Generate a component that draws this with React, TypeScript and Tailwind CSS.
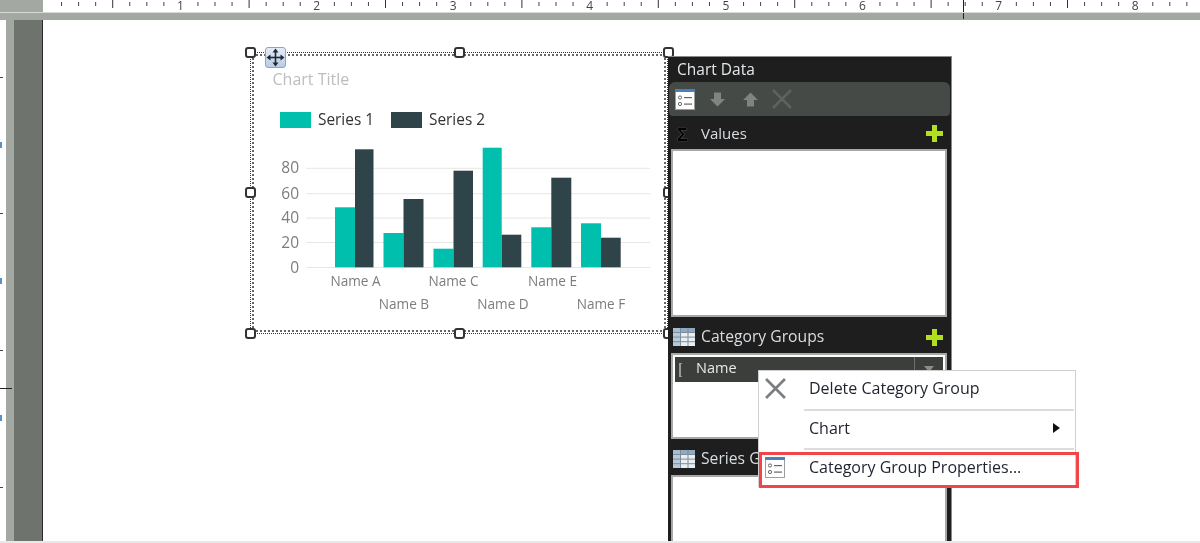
import React from "react";

const FONT = "'Open Sans','Noto Sans',sans-serif";
const BASE_LEFT = 43;
const TICK0 = 44;
const PER = 17.05;
const ticks = Array.from({ length: 68 }, (_, i) => i);

function TopRuler() {
  return (
    <svg width={1157} height={12} className="block overflow-visible">
      {ticks.map((i) => {
        const x = TICK0 + i * PER - BASE_LEFT;
        const m = i % 8;
        if (m === 0) return null;
        if (m === 4) return <rect key={i} x={x} y={0} width={1} height={8} fill="#333" />;
        return <rect key={i} x={x} y={2} width={1} height={4} fill="#444" />;
      })}
      {[1, 2, 3, 4, 5, 6, 7, 8].map((n) => (
        <text key={n} x={TICK0 + n * 8 * PER - BASE_LEFT} y={9.5} textAnchor="middle" fontSize={12} fontFamily={FONT} fill="#444">
          {n}
        </text>
      ))}
      <rect x={920} y={0} width={1} height={12} fill="#222" />
    </svg>
  );
}

function LeftRuler() {
  const marks = [77, 213, 350, 487];
  return (
    <svg width={6} height={523} className="block">
      {marks.map((y) => (
        <rect key={y} x={0} y={y - 20} width={3} height={1} fill="#444" />
      ))}
      {[145, 281, 418].map((y) => (
        <rect key={y} x={0} y={y - 23} width={2} height={6} fill="#5b8fc0" />
      ))}
    </svg>
  );
}

function Handle({ cls }: { cls: string }) {
  return <div className={`absolute w-[11px] h-[11px] rounded-[3px] bg-white border-2 border-[#333] ${cls}`} />;
}

function MoveIcon() {
  return (
    <div className="absolute left-[14px] top-[-6px] w-[21px] h-[21px] rounded-[3px] border border-[#8ea3c4] bg-gradient-to-b from-[#e6edf7] to-[#b9cbe6] flex items-center justify-center">
      <svg width="19" height="19" viewBox="0 0 19 19" fill="#1c2b33">
        <rect x="8.7" y="3" width="1.6" height="13" />
        <rect x="3" y="8.7" width="13" height="1.6" />
        <path d="M9.5 0.5 L12.5 4.5 H6.5 Z" />
        <path d="M9.5 18.5 L12.5 14.5 H6.5 Z" />
        <path d="M0.5 9.5 L4.5 6.5 V12.5 Z" />
        <path d="M18.5 9.5 L14.5 6.5 V12.5 Z" />
      </svg>
    </div>
  );
}

const bars = [
  [335, 20, 207.3, "#00bfad"], [355, 18.5, 149.3, "#2f4449"],
  [383.5, 20, 233, "#00bfad"], [403.5, 20, 199, "#2f4449"],
  [433.5, 20, 248.7, "#00bfad"], [453.5, 19.5, 170.7, "#2f4449"],
  [482.7, 19, 147.7, "#00bfad"], [501.7, 19.6, 234.7, "#2f4449"],
  [531.3, 20, 227.3, "#00bfad"], [551.3, 20, 177.7, "#2f4449"],
  [581, 20, 223.3, "#00bfad"], [601, 19.7, 237.7, "#2f4449"],
] as const;

function ChartSvg() {
  return (
    <svg className="absolute left-[-1px] top-[-1px]" width={420} height={284} viewBox="250 52 420 284">
      <text x={272.5} y={85} fontSize={16} fontFamily={FONT} fill="#bdbdbd">Chart Title</text>
      <rect x={280} y={112} width={31} height={16} fill="#00bfad" />
      <text x={318} y={125} fontSize={15.4} fontFamily={FONT} fill="#333">Series 1</text>
      <rect x={391} y={112} width={31} height={16} fill="#2f4449" />
      <text x={429} y={125} fontSize={15.4} fontFamily={FONT} fill="#333">Series 2</text>
      {[[168.3, "80"], [193.7, "60"], [218, "40"], [242.5, "20"], [267.5, "0"]].map(([y, l]) => (
        <g key={l as string}>
          <rect x={306} y={(y as number) - 0.5} width={344} height={1} fill="#e6e6e6" />
          <text x={299} y={(y as number) + 5} textAnchor="end" fontSize={15.5} fontFamily={FONT} fill="#7d7d7d">{l}</text>
        </g>
      ))}
      {bars.map(([x, w, t, c]) => (
        <rect key={x} x={x} y={t} width={w} height={267.3 - t} fill={c} />
      ))}
      {[["Name A", 355.5, 285.5], ["Name B", 404, 308.5], ["Name C", 453.5, 285.5], ["Name D", 503, 308.5], ["Name E", 552.5, 285.5], ["Name F", 601, 308.5]].map(([l, x, y]) => (
        <text key={l as string} x={x as number} y={y as number} textAnchor="middle" fontSize={13.6} fontFamily={FONT} fill="#7d7d7d">{l}</text>
      ))}
    </svg>
  );
}

function PropsIcon({ w = 20 }: { w?: number }) {
  return (
    <svg width={w} height={w + 1} viewBox="0 0 20 21" className="block">
      <rect x="0.5" y="0.5" width="19" height="20" fill="#fff" stroke="#9aa0a0" />
      <rect x="0" y="0" width="20" height="3" fill="#4a7fb8" />
      <circle cx="5" cy="8.5" r="1.6" fill="none" stroke="#666" />
      <circle cx="5" cy="15" r="1.6" fill="none" stroke="#666" />
      <rect x="9" y="8" width="8" height="1.2" fill="#666" />
      <rect x="9" y="14.5" width="8" height="1.2" fill="#666" />
    </svg>
  );
}

function GridIcon() {
  return (
    <svg width="22" height="18" viewBox="0 0 22 18" className="block">
      <rect width="22" height="18" fill="#e9eef3" />
      <rect width="22" height="4" fill="#8fa9c2" />
      <rect x="0" y="0" width="7" height="18" fill="#a9bfd3" opacity="0.8" />
      {[4, 8.6, 13.2].map((y) => <rect key={y} x="0" y={y} width="22" height="1" fill="#7e8c99" />)}
      {[7, 14.5].map((x) => <rect key={x} x={x} y="0" width="1" height="18" fill="#7e8c99" />)}
    </svg>
  );
}

function Plus() {
  return (
    <svg width="17" height="17" viewBox="0 0 17 17" className="block">
      <path d="M6 0h5v6h6v5h-6v6H6v-6H0V6h6z" fill="#b2df1e" />
    </svg>
  );
}

function X({ size, color }: { size: number; color: string }) {
  return (
    <svg width={size} height={size} viewBox="0 0 20 20" className="block">
      <path d="M1 1 L19 19 M19 1 L1 19" stroke={color} strokeWidth="2.6" />
    </svg>
  );
}

function Arrow({ up }: { up?: boolean }) {
  return (
    <svg width="15" height="15" viewBox="0 0 15 15" className="block">
      <path d={up ? "M7.5 0.5 L15 8 H11 V14.5 H4 V8 H0 Z" : "M7.5 14.5 L15 7 H11 V0.5 H4 V7 H0 Z"} fill="#7f847f" />
    </svg>
  );
}

function SectionHead({ icon, label, h, size }: { icon: React.ReactNode; label: string; h: string; size: string }) {
  return (
    <div className={`flex items-center ${h} ${size} text-[#d8dde0] pl-[5px] pr-[8px]`}>
      <div className="w-[25px] flex items-center">{icon}</div>
      <span className="ml-[3px]">{label}</span>
      <div className="ml-auto"><Plus /></div>
    </div>
  );
}

function Panel() {
  return (
    <div className="absolute left-[625px] top-[36px] w-[284px] h-[520px] bg-[#1e1e1e] border-r border-t border-[#8a8a8a] flex flex-col text-white">
      <div className="h-[25px] pl-[9px] flex items-center text-[15.5px] text-[#e4e8ea]">Chart Data</div>
      <div className="h-[34px] mx-[1px] rounded-t-[6px] rounded-b-[4px] bg-[#464a46] flex items-center pl-[6px] gap-[12px]">
        <PropsIcon />
        <div className="ml-[3px]"><Arrow /></div>
        <div className="ml-[6px]"><Arrow up /></div>
        <div className="ml-[2px]"><X size={20} color="#5d625d" /></div>
      </div>
      <SectionHead h="h-[33px] pt-[2px]" size="text-[15px]" label="Values" icon={<span className="pl-[4px] text-[18px] leading-none text-black font-bold [text-shadow:0_0_1px_#aaa]">Σ</span>} />
      <div className="ml-[3px] mr-[4px] h-[168px] bg-white border-2 border-[#a8a8a8]" />
      <SectionHead h="h-[36px] pt-[4px]" size="text-[15.7px]" label="Category Groups" icon={<GridIcon />} />
      <div className="ml-[3px] mr-[4px] h-[86px] bg-white border-2 border-[#a8a8a8] p-[2px]">
        <div className="h-[25px] bg-[#3c3e3c] flex items-center text-[14.5px] text-[#e8e8e8]">
          <span className="w-[3px] h-[14px] ml-[4px] border-l-2 border-t border-b border-[#9a9a9a]" />
          <span className="ml-[14px] pb-[4px]">Name</span>
          <div className="ml-auto h-full w-[29px] border-l border-[#6d6f6d] flex justify-center pt-[9px]">
            <svg width="10" height="6" viewBox="0 0 10 6" className="block"><path d="M0 0 H10 L5 6 Z" fill="#8a8c8a" /></svg>
          </div>
        </div>
      </div>
      <SectionHead h="h-[36px] pt-[4px]" size="text-[15.7px]" label="Series Groups" icon={<GridIcon />} />
      <div className="ml-[3px] mr-[4px] flex-1 bg-white border-2 border-[#a8a8a8]" />
    </div>
  );
}

function MenuRow({ icon, label, arrow, h }: { icon?: React.ReactNode; label: string; arrow?: boolean; h: string }) {
  return (
    <div className={`${h} pb-[4px] flex items-center text-[16px] text-[#1f2330]`}>
      <div className="w-[46px] pl-[6px] flex justify-start">{icon}</div>
      <span className="ml-[4px]">{label}</span>
      {arrow && (
        <svg width="7" height="10" viewBox="0 0 7 10" className="ml-auto mr-[15px] block">
          <path d="M0 0 L7 5 L0 10 Z" fill="#111" />
        </svg>
      )}
    </div>
  );
}

function Menu() {
  return (
    <div className="absolute left-[715px] top-[350px] w-[318px] h-[117px] bg-white border border-[#cfcfcf] border-b-0">
      <MenuRow h="h-[38px]" label="Delete Category Group" icon={<X size={21} color="#7b7f82" />} />
      <div className="h-[2px] ml-[45px] mr-[1px] bg-[#dcdcdc]" />
      <MenuRow h="h-[37px]" label="Chart" arrow />
      <div className="h-[2px] ml-[45px] mr-[1px] bg-[#dcdcdc]" />
      <MenuRow h="h-[38px]" label="Category Group Properties..." icon={<PropsIcon w={20} />} />
      <div className="absolute left-0 top-[81px] w-[320px] h-[36px] border-[3px] border-[#f2454a]" />
    </div>
  );
}

export default function App() {
  return (
    <div className="w-[1200px] h-[543px] overflow-hidden flex flex-col bg-white blur-[0.4px]" style={{ fontFamily: FONT }}>
      <div className="flex h-[12px]">
        <div className="w-[43px] bg-[#a3a8a3]" />
        <div className="flex-1 bg-white"><TopRuler /></div>
      </div>
      <div className="h-[8px] bg-[#a3a8a3] border-t border-[#d8dad8] relative">
        <div className="absolute left-[963px] top-0 w-[1px] h-[6px] bg-[#222]" />
      </div>
      <div className="flex-1 flex min-h-0">
        <div className="w-[6px] bg-white relative overflow-hidden">
          <LeftRuler />
          <div className="absolute left-0 top-[368px] w-[6px] h-[1px] bg-[#222]" />
        </div>
        <div className="w-[8px] bg-[#a3a8a3] relative">
          <div className="absolute left-0 top-[368px] w-[6px] h-[1px] bg-[#222]" />
        </div>
        <div className="w-[28px] bg-[#6f736e]" />
        <div className="w-[1px] bg-[#2c2c2c]" />
        <div className="flex-1 relative overflow-hidden bg-white">
          <div className="absolute left-[207px] top-[32px] w-[418px] h-[282px] border border-dotted border-[#333]">
            <div className="absolute inset-[1px] border-2 border-dotted border-[#666]" />
            <ChartSvg />
            <Handle cls="left-[-6px] top-[-6px]" />
            <Handle cls="left-[203px] top-[-6px]" />
            <Handle cls="left-[412px] top-[-6px]" />
            <Handle cls="left-[-6px] top-[134px]" />
            <Handle cls="left-[412px] top-[134px]" />
            <Handle cls="left-[-6px] top-[275px]" />
            <Handle cls="left-[203px] top-[275px]" />
            <Handle cls="left-[412px] top-[275px]" />
            <MoveIcon />
          </div>
          <Panel />
          <Menu />
        </div>
      </div>
      <div className="h-[2px] bg-[#e8e8e8]" />
    </div>
  );
}
